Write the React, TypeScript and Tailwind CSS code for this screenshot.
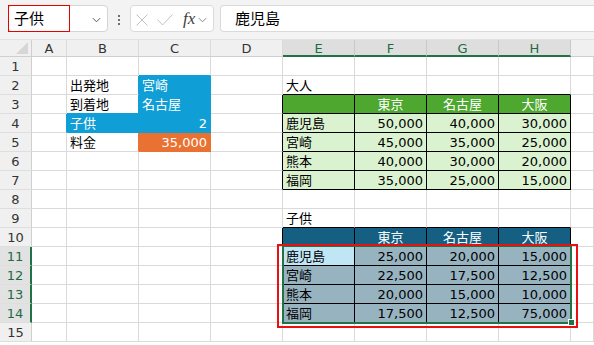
import React from "react";

type Fill = "blue" | "orange" | "green" | "lgreen" | "navy" | "active" | "sel";
type Cell = { t?: string; r?: boolean; c?: boolean; fill?: Fill };

const COLS = ["A", "B", "C", "D", "E", "F", "G", "H", "I"];
const ROWS = [1, 2, 3, 4, 5, 6, 7, 8, 9, 10, 11, 12, 13, 14, 15];

const WIDTH: Record<string, string> = {
  A: "w-[35px]",
  B: "w-[72px]",
  C: "w-[72px]",
  D: "w-[72px]",
  E: "w-[72px]",
  F: "w-[72px]",
  G: "w-[72px]",
  H: "w-[72px]",
  I: "flex-1",
};

const BG: Record<Fill, string> = {
  blue: "bg-[#0f9ed5] text-white",
  orange: "bg-[#e97132] text-white",
  green: "bg-[#4ea72e] text-white",
  lgreen: "bg-[#daf2d0] text-black",
  navy: "bg-[#156082] text-white",
  active: "bg-[#c0e6f5] text-black",
  sel: "bg-[#98b3c0] text-black",
};

const RIGHT: Record<string, string> = {
  grid: "border-r-[#dadada]",
  black: "border-r-black",
  blue: "border-r-[#0f9ed5]",
  orange: "border-r-[#e97132]",
};

const BOTTOM: Record<string, string> = {
  grid: "border-b-[#dadada]",
  black: "border-b-black",
  blue: "border-b-[#0f9ed5]",
  orange: "border-b-[#e97132]",
};

const cells: Record<string, Cell> = {
  B2: { t: "出発地" },
  C2: { t: "宮崎", fill: "blue" },
  B3: { t: "到着地" },
  C3: { t: "名古屋", fill: "blue" },
  B4: { t: "子供", fill: "blue" },
  C4: { t: "2", r: true, fill: "blue" },
  B5: { t: "料金" },
  C5: { t: "35,000", r: true, fill: "orange" },
  E2: { t: "大人" },
  E9: { t: "子供" },
};

const towns = ["鹿児島", "宮崎", "熊本", "福岡"];
const adult = [
  ["50,000", "40,000", "30,000"],
  ["45,000", "35,000", "25,000"],
  ["40,000", "30,000", "20,000"],
  ["35,000", "25,000", "15,000"],
];
const child = [
  ["25,000", "20,000", "15,000"],
  ["22,500", "17,500", "12,500"],
  ["20,000", "15,000", "10,000"],
  ["17,500", "12,500", "75,000"],
];

const heads = ["東京", "名古屋", "大阪"];
cells.E3 = { fill: "green" };
cells.E10 = { fill: "navy" };
heads.forEach((h, i) => {
  cells[COLS[5 + i] + "3"] = { t: h, c: true, fill: "green" };
  cells[COLS[5 + i] + "10"] = { t: h, c: true, fill: "navy" };
});
towns.forEach((town, i) => {
  cells["E" + (4 + i)] = { t: town, fill: "lgreen" };
  cells["E" + (11 + i)] = { t: town, fill: i === 0 ? "active" : "sel" };
  adult[i].forEach((v, j) => {
    cells[COLS[5 + j] + (4 + i)] = { t: v, r: true, fill: "lgreen" };
  });
  child[i].forEach((v, j) => {
    cells[COLS[5 + j] + (11 + i)] = { t: v, r: true, fill: "sel" };
  });
});

const inTable = (ci: number, r: number) =>
  ci >= 4 && ci <= 7 && ((r >= 3 && r <= 7) || (r >= 10 && r <= 14));

const cover = (ci: number, r: number) => {
  const f = cells[COLS[ci] + r]?.fill;
  return f === "blue" || f === "orange" ? f : undefined;
};

const rightLine = (ci: number, r: number) => {
  if (inTable(ci, r) || inTable(ci + 1, r)) return "black";
  return cover(ci, r) || cover(ci + 1, r) || "grid";
};

const bottomLine = (ci: number, r: number) => {
  if (inTable(ci, r) || inTable(ci, r + 1)) return "black";
  return cover(ci, r) || cover(ci, r + 1) || "grid";
};

const Chevron = ({ className }: { className: string }) => (
  <svg viewBox="0 0 10 6" className={className} fill="none" stroke="currentColor" strokeWidth="1.1">
    <path d="M1 1l4 4 4-4" />
  </svg>
);

const Toolbar = () => (
  <div className="h-[39px] bg-[#f3f3f3] flex items-start pt-[5px] pl-[8px]">
    <div className="relative w-[100px] h-[27px] bg-white border border-[#d4d4d4] rounded-[4px] flex items-center justify-between pl-[5px] pr-[6px]">
      <span className="text-[15px] text-black pt-[2px]">子供</span>
      <Chevron className="w-[9px] h-[6px] text-[#555] mt-[2px]" />
      <div className="absolute -left-px -top-px w-[62px] h-[27px] border border-[#e60000]" />
    </div>
    <div className="w-[22px] h-[27px] flex flex-col items-center justify-center gap-[2px] pt-[2px]">
      <span className="w-[2px] h-[2px] bg-[#444] rounded-full" />
      <span className="w-[2px] h-[2px] bg-[#444] rounded-full" />
      <span className="w-[2px] h-[2px] bg-[#444] rounded-full" />
    </div>
    <div className="w-[84px] h-[27px] bg-white border border-[#dadada] rounded-[4px] flex items-center pl-[5px]">
      <svg viewBox="0 0 12 12" className="w-[12px] h-[12px] mt-[2px] text-[#c2c2c2]" fill="none" stroke="currentColor" strokeWidth="1">
        <path d="M0.5 0.5l11 11M11.5 0.5l-11 11" />
      </svg>
      <svg viewBox="0 0 16 12" className="w-[16px] h-[12px] ml-[9px] mt-[2px] text-[#c2c2c2]" fill="none" stroke="currentColor" strokeWidth="1">
        <path d="M0.5 5.5l5 5.5 10-10.5" />
      </svg>
      <span className="ml-[10px] text-[17px] italic text-[#404040] font-['Liberation_Serif',serif] leading-none">
        fx
      </span>
      <Chevron className="w-[9px] h-[6px] ml-[3px] mt-[3px] text-[#8a8a8a]" />
    </div>
    <div className="ml-[6px] flex-1 h-[27px] bg-white border border-r-0 border-[#dadada] rounded-l-[4px] flex items-center pl-[14px]">
      <span className="text-[15px] text-black pt-[2px]">鹿児島</span>
    </div>
  </div>
);

const selCol = (c: string) => c === "E" || c === "F" || c === "G" || c === "H";
const selRow = (r: number) => r >= 11 && r <= 14;

const ColumnHeader = () => (
  <div className="flex h-[18px] border-t border-[#e2e2e2] bg-[#f0f0f0]">
    <div className="relative w-[32px] border-r border-b border-[#cfcfcf]">
      <div className="absolute right-[3px] bottom-[2px] w-0 h-0 border-l-[12px] border-l-transparent border-b-[12px] border-b-[#d6d6d6]" />
    </div>
    {COLS.map((c) => (
      <div
        key={c}
        className={`${WIDTH[c]} flex items-center justify-center text-[13px] pt-[1px] ${
          selCol(c)
            ? "bg-[#dedede] text-[#1d6b42] border-r border-r-[#c8c8c8] border-b-2 border-b-[#217346]"
            : "text-[#333] border-r border-r-[#dadada] border-b border-b-[#cfcfcf]"
        } ${c === "I" ? "border-r-0" : ""}`}
      >
        {c === "I" ? "" : c}
      </div>
    ))}
  </div>
);

const Row = ({ r }: { r: number }) => (
  <div className="flex h-[19px]">
    <div
      className={`w-[32px] flex items-center justify-center text-[13px] pt-[1px] border-b border-b-[#dedede] ${
        selRow(r)
          ? "bg-[#e2e2e2] text-[#1d6b42] border-r-2 border-r-[#217346]"
          : "bg-[#f0f0f0] text-[#333] border-r border-r-[#cfcfcf]"
      }`}
    >
      {r}
    </div>
    {COLS.map((c, ci) => {
      const cell = cells[c + r] || {};
      const fill = cell.fill ? BG[cell.fill] : "bg-white text-black";
      const align = cell.r ? "justify-end" : cell.c ? "justify-center" : "justify-start";
      return (
        <div
          key={c}
          className={`${WIDTH[c]} flex items-center ${align} px-[3px] pt-[1px] border-r border-b ${RIGHT[rightLine(ci, r)]} ${
            BOTTOM[bottomLine(ci, r)]
          } ${fill} text-[13px] whitespace-nowrap overflow-hidden`}
        >
          {cell.t}
        </div>
      );
    })}
  </div>
);

export default function App() {
  return (
    <div className="relative w-[594px] h-[345px] overflow-hidden bg-white font-['DejaVu_Sans','Noto_Sans_CJK_JP',sans-serif] leading-none">
      <Toolbar />
      <ColumnHeader />
      {ROWS.map((r) => (
        <Row key={r} r={r} />
      ))}
      <div className="absolute left-[282px] top-[245px] w-[290px] h-[79px] border-2 border-[#217346]" />
      <div className="absolute left-[568px] top-[319px] w-[7px] h-[7px] bg-[#217346] border border-white" />
      <div className="absolute left-[277px] top-[244px] w-[301px] h-[84px] border-2 border-[#e81010]" />
    </div>
  );
}
